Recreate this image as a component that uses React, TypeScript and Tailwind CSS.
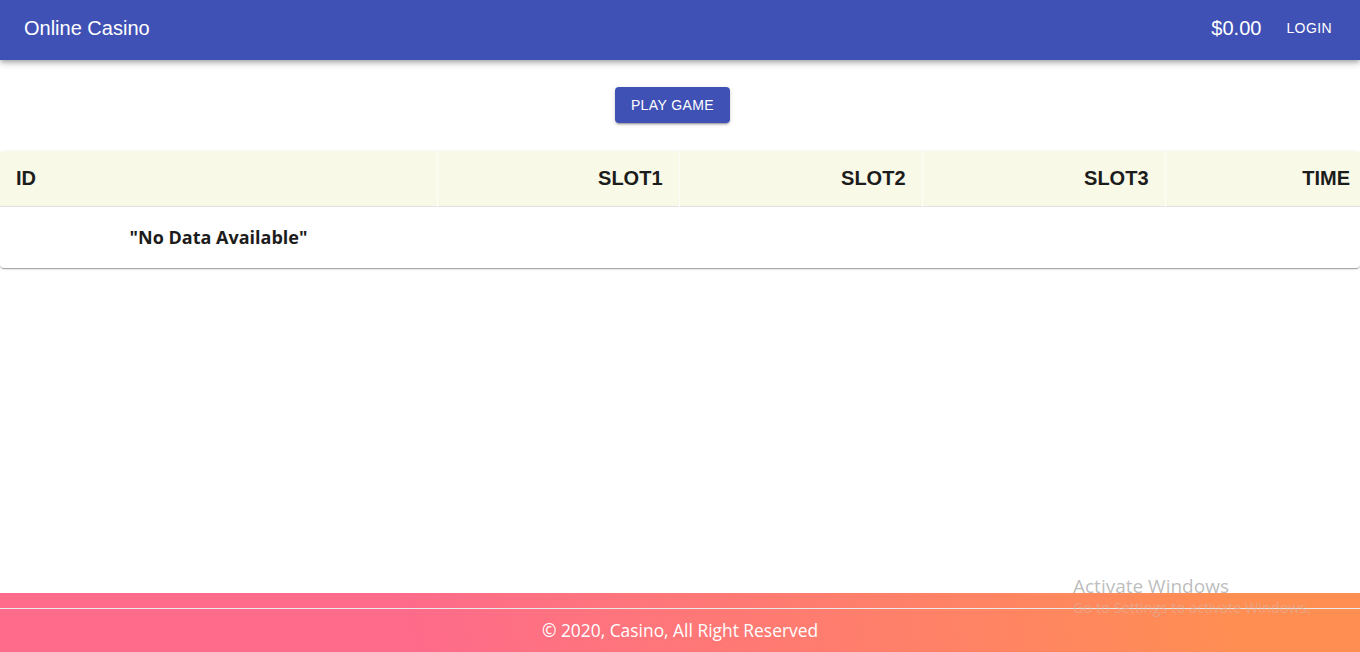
import React from "react";

interface Spin {
  id: number;
  slot1: number;
  slot2: number;
  slot3: number;
  time: string;
}

const spins: Spin[] = [];

export default function App() {
  return (
    <div className="min-h-screen flex flex-col bg-white font-['Liberation_Sans',Arial,sans-serif]">
      {/* top bar */}
      <header className="h-[60px] bg-[#3f51b5] text-white flex items-center justify-between pl-6 pr-7 pb-1 shadow-[0_2px_4px_-1px_rgba(0,0,0,0.2),0_4px_5px_0_rgba(0,0,0,0.14),0_1px_10px_0_rgba(0,0,0,0.12)] relative z-10">
        <h1 className="text-[20px] leading-none">Online Casino</h1>
        <div className="flex items-center gap-[25px]">
          <span className="text-[20px] leading-none">$0.00</span>
          <button className="text-[14px] uppercase tracking-[0.4px] leading-none">Login</button>
        </div>
      </header>

      <div className="flex justify-center pt-[27px] pb-[28px] pr-[15px]">
        <button className="h-9 w-[115px] rounded bg-[#3f51b5] text-white text-[14px] uppercase tracking-[0.4px] shadow-[0_3px_1px_-2px_rgba(0,0,0,0.2),0_2px_2px_0_rgba(0,0,0,0.14),0_1px_5px_0_rgba(0,0,0,0.12)]">
          Play Game
        </button>
      </div>

      <div className="rounded shadow-[0_2px_1px_-1px_rgba(0,0,0,0.2),0_1px_1px_0_rgba(0,0,0,0.14),0_1px_3px_0_rgba(0,0,0,0.12)] overflow-hidden">
        <table className="w-full border-collapse table-fixed">
          <thead>
            <tr className="bg-[#f8f9e7] h-[55px] text-[20px] font-bold text-[#1c1c1c] border-b border-[#e0e0e0]">
              <th className="w-[437px] text-left pl-4 border-r border-white/70">ID</th>
              <th className="w-[242px] text-right pr-4 border-r border-white/70">SLOT1</th>
              <th className="w-[243px] text-right pr-4 border-r border-white/70">SLOT2</th>
              <th className="w-[243px] text-right pr-4 border-r border-white/70">SLOT3</th>
              <th className="text-right pr-[10px]">TIME</th>
            </tr>
          </thead>
          <tbody>
            {spins.length === 0 ? (
              <tr className="h-[62px]">
                <td className="text-center text-[18px] font-bold text-[#1c1c1c] font-['Open_Sans',sans-serif]">
                  "No Data Available"
                </td>
                <td />
                <td />
                <td />
                <td />
              </tr>
            ) : (
              spins.map((s) => (
                <tr key={s.id}>
                  <td>{s.id}</td>
                  <td>{s.slot1}</td>
                  <td>{s.slot2}</td>
                  <td>{s.slot3}</td>
                  <td>{s.time}</td>
                </tr>
              ))
            )}
          </tbody>
        </table>
      </div>

      <footer className="mt-auto h-[59px] bg-[linear-gradient(75deg,#fe6b8b_30%,#ff8e53_90%)] text-white font-['Open_Sans',sans-serif] flex flex-col">
        <hr className="mt-[15px] border-t border-[#e8e8e8]" />
        <p className="flex-1 flex items-center justify-center text-[17.4px] pb-[1px]">
          © 2020, Casino, All Right Reserved
        </p>
      </footer>

      {/* OS watermark */}
      <div className="absolute left-[1073px] top-[575px] font-['Open_Sans',sans-serif] pointer-events-none">
        <div className="text-[19px] text-[#a0a0a0]/70 leading-tight">Activate Windows</div>
        <div className="text-[14.5px] text-[#d9b2a0]/60 leading-tight">Go to Settings to activate Windows.</div>
      </div>
    </div>
  );
}
